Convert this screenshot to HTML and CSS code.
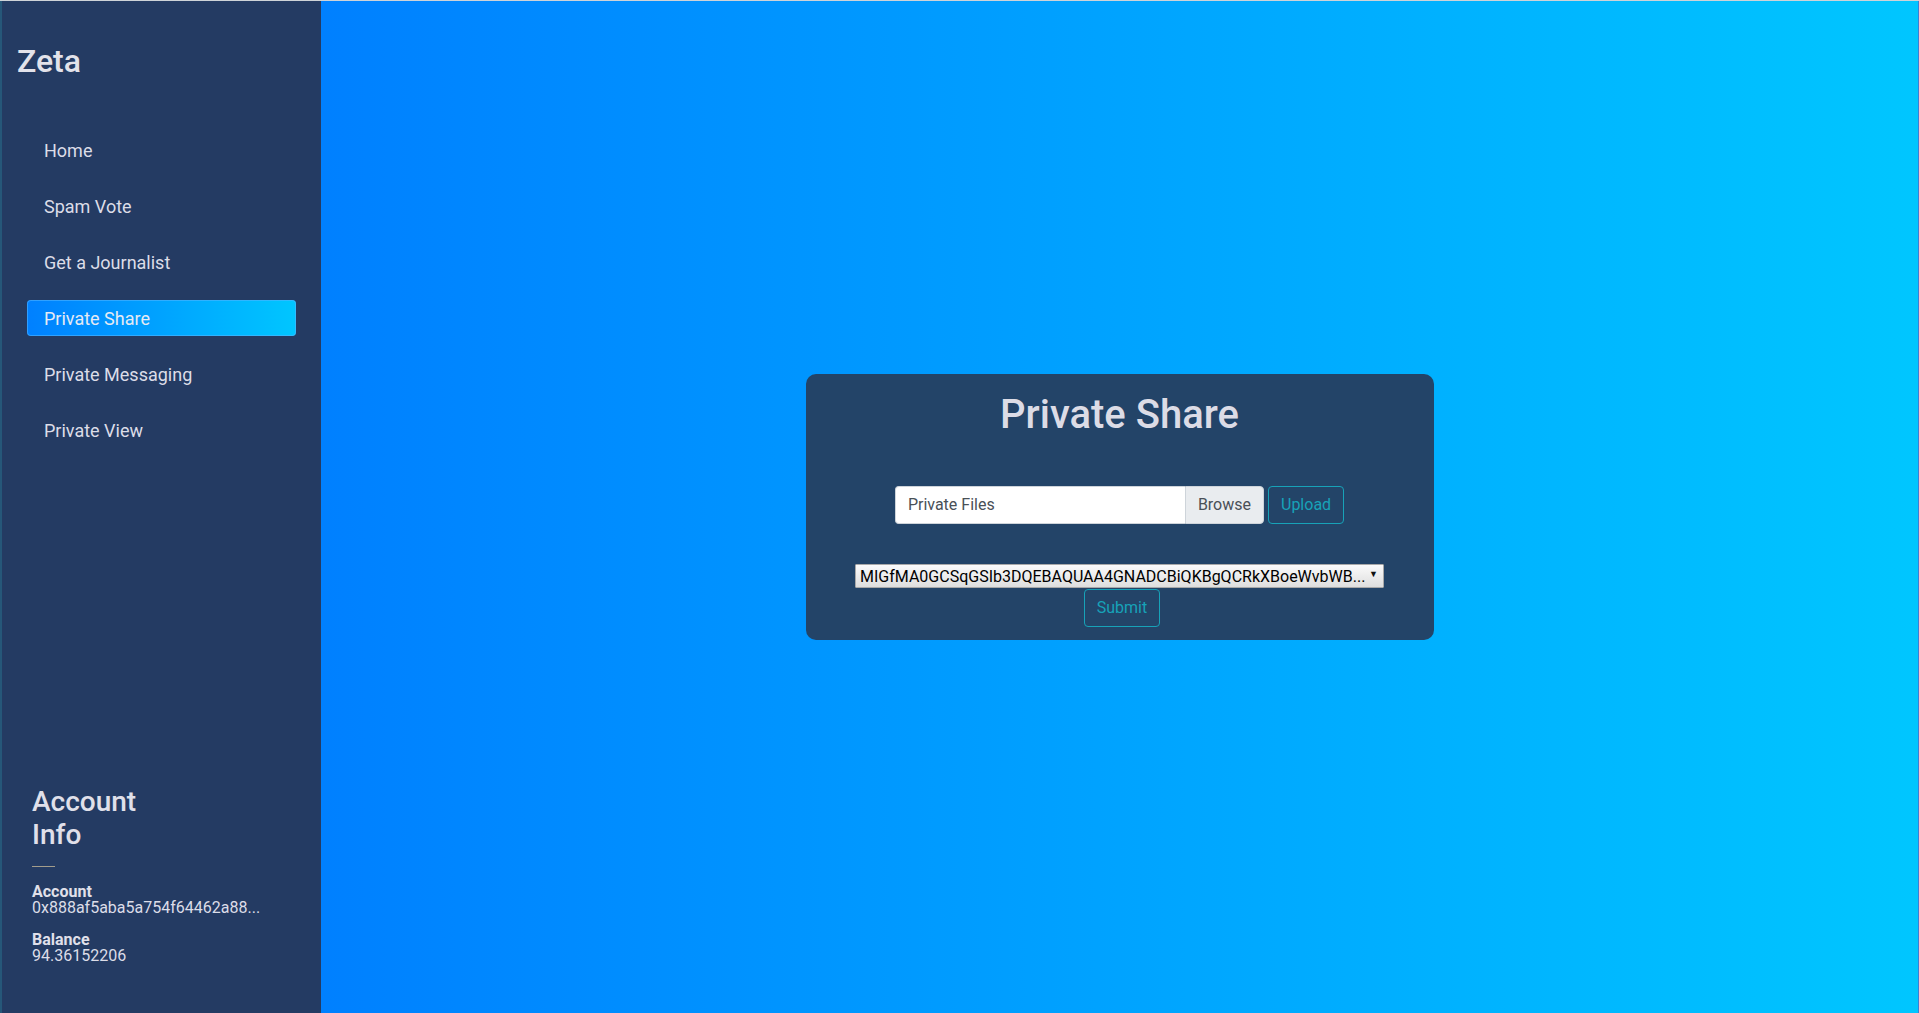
FILE: index.html
```html
<!DOCTYPE html>
<html lang="en">
<head>
<meta charset="utf-8">
<title>Zeta - Private Share</title>
<link rel="stylesheet" href="styles.css">
</head>
<body>
<div class="app">
  <aside class="sidebar">
    <div class="brand">Zeta</div>
    <nav class="nav">
      <a class="nav-item">Home</a>
      <a class="nav-item">Spam Vote</a>
      <a class="nav-item">Get a Journalist</a>
      <a class="nav-item active">Private Share</a>
      <a class="nav-item">Private Messaging</a>
      <a class="nav-item">Private View</a>
    </nav>
    <div class="account">
      <h3 class="account-title">Account Info</h3>
      <div class="divider"></div>
      <div class="acc-label">Account</div>
      <div class="acc-value">0x888af5aba5a754f64462a88...</div>
      <div class="acc-label acc-gap">Balance</div>
      <div class="acc-value">94.36152206</div>
    </div>
  </aside>
  <main class="main">
    <section class="card">
      <h2 class="card-title">Private Share</h2>
      <div class="upload-row">
        <div class="file-group">
          <div class="file-label">Private Files</div>
          <div class="file-browse">Browse</div>
        </div>
        <button class="btn-outline">Upload</button>
      </div>
      <div class="submit-col">
        <div class="select-wrap">
          <div class="key-select">MIGfMA0GCSqGSIb3DQEBAQUAA4GNADCBiQKBgQCRkXBoeWvbWB...</div>
          <span class="select-arrow">▼</span>
        </div>
        <button class="btn-outline btn-submit">Submit</button>
      </div>
    </section>
  </main>
</div>
</body>
</html>
```
FILE: styles.css
```css
* { box-sizing: border-box; }
html, body { margin: 0; padding: 0; height: 100%; }
body {
  font-family: Roboto, "Liberation Sans", Arial, sans-serif;
  border-top: 1px solid #cfd3d8;
  overflow: hidden;
}
.app {
  display: flex;
  height: 1012px;
  border-left: 2px solid #265779;
  border-right: 1px solid #3c7fd6;
}
.sidebar {
  width: 319px;
  flex: none;
  background: #243b63;
  display: flex;
  flex-direction: column;
  color: #dcdde8;
}
.brand {
  margin: 41px 0 0 15px;
  font-size: 32px;
  line-height: 38px;
  font-weight: 500;
  color: #e2e2ea;
}
.nav {
  margin: 52px 25px 0;
  display: flex;
  flex-direction: column;
  gap: 20px;
}
.nav-item {
  display: block;
  height: 36px;
  line-height: 37px;
  padding-left: 17px;
  font-size: 18px;
  color: #dcdde8;
  border-radius: 4px;
}
.nav-item.active {
  background: linear-gradient(to right, #0080ff, #00c6ff);
  color: #e6eaf4;
  box-shadow: inset 0 0 0 1px rgba(80, 180, 255, 0.6);
}
.account {
  margin-top: auto;
  padding: 0 0 49px 30px;
}
.account-title {
  margin: 0;
  max-width: 125px;
  font-size: 28px;
  line-height: 33px;
  font-weight: 500;
  color: #e0e0ea;
}
.divider {
  margin-top: 15px;
  width: 23px;
  height: 1px;
  background: #a39d8c;
}
.acc-label {
  margin-top: 17px;
  font-size: 16px;
  line-height: 16px;
  font-weight: 700;
  color: #e0e0ea;
}
.acc-label.acc-gap { margin-top: 16px; }
.acc-value {
  font-size: 16px;
  line-height: 16px;
  color: #dcdde8;
}
.main {
  flex: 1;
  background: linear-gradient(to right, #0080ff, #00c6ff);
  display: flex;
  align-items: center;
  justify-content: center;
}
.card {
  width: 628px;
  height: 266px;
  background: #234468;
  border-radius: 10px;
  padding: 17px 0 13px;
  text-align: center;
}
.card-title {
  margin: 0;
  font-size: 40px;
  line-height: 48px;
  font-weight: 500;
  color: #dcdce6;
}
.upload-row {
  margin-top: 47px;
  display: flex;
  justify-content: center;
  gap: 4px;
}
.file-group {
  display: flex;
  height: 38px;
}
.file-label {
  width: 290px;
  height: 38px;
  background: #fff;
  border: 1px solid #ced4da;
  border-right: none;
  border-radius: 4px 0 0 4px;
  padding: 6px 12px;
  font-size: 16px;
  line-height: 24px;
  color: #495057;
  text-align: left;
}
.file-browse {
  height: 38px;
  background: #e9ecef;
  border: 1px solid #ced4da;
  border-radius: 0 4px 4px 0;
  padding: 6px 12px;
  font-size: 16px;
  line-height: 24px;
  color: #495057;
}
.btn-outline {
  height: 38px;
  background: transparent;
  border: 1px solid #17a2b8;
  border-radius: 4px;
  padding: 6px 12px;
  font-family: Roboto, "Liberation Sans", Arial, sans-serif;
  font-size: 16px;
  line-height: 24px;
  color: #17a2b8;
}
.btn-submit { margin-left: 5px; }
.submit-col {
  margin-top: 40px;
  display: flex;
  flex-direction: column;
  align-items: center;
  gap: 1px;
}
.select-wrap {
  position: relative;
  width: 529px;
  height: 24px;
}
.key-select {
  width: 529px;
  height: 24px;
  border: 1px solid #a9a9a9;
  border-radius: 1px;
  background: linear-gradient(to bottom, #fbfbfb, #dedede);
  padding: 0 20px 0 4px;
  font-size: 16px;
  line-height: 23px;
  color: #000;
  text-align: left;
  white-space: nowrap;
  overflow: hidden;
}
.select-arrow {
  position: absolute;
  right: 6px;
  top: 5px;
  font-size: 9px;
  line-height: 10px;
  color: #111;
}
```
